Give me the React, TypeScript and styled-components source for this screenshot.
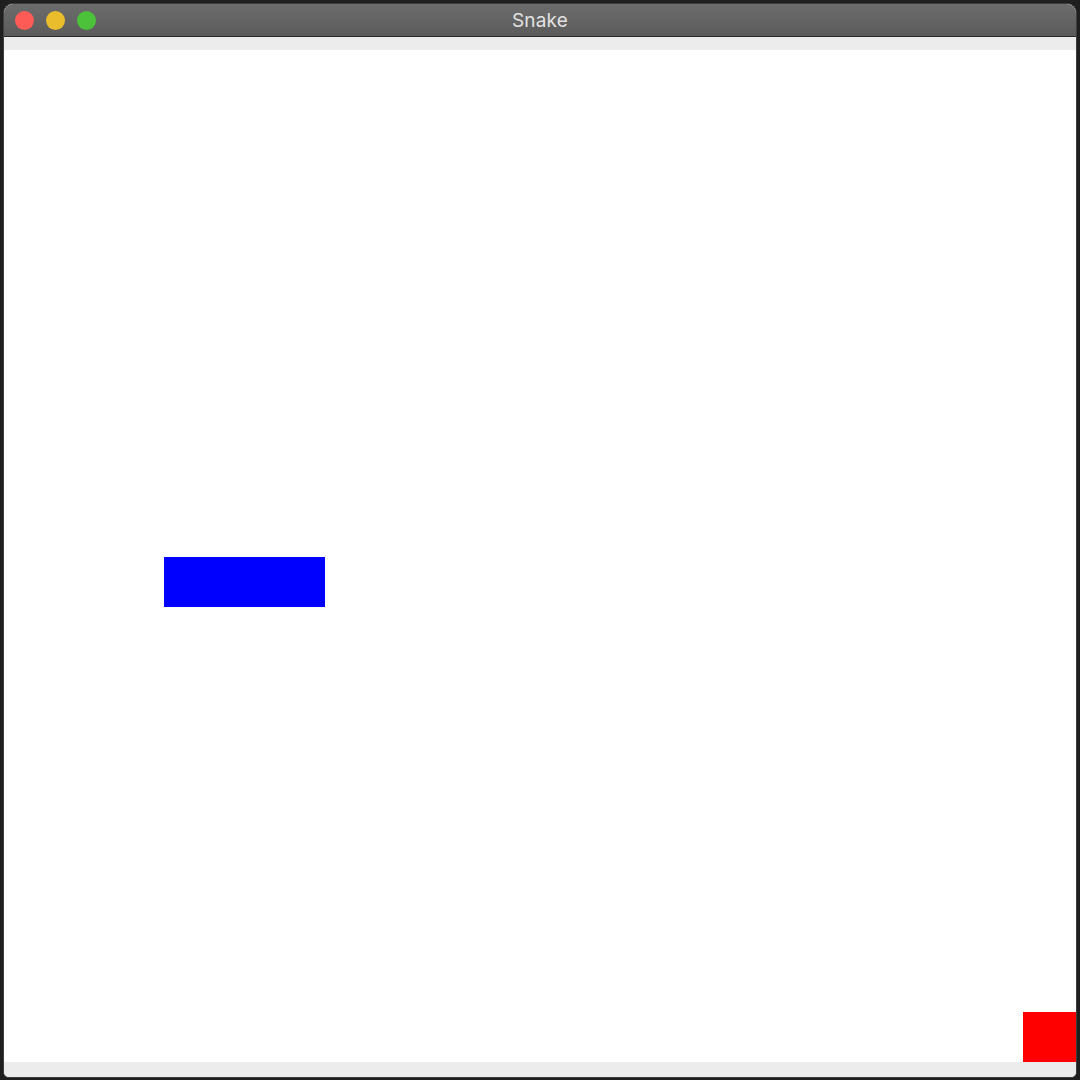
import React from "react";
import styled, { createGlobalStyle } from "styled-components";

const Global = createGlobalStyle`
  html, body { margin: 0; padding: 0; background: #1e1e1e; }
  body { width: 1080px; height: 1080px; overflow: hidden; font-family: "Inter", "Liberation Sans", sans-serif; }
`;

const Desktop = styled.div`
  width: 1080px;
  height: 1080px;
  padding: 3px 0 0 3px;
  box-sizing: border-box;
  background: #1f1f1f;
`;

const Window = styled.div`
  width: 1074px;
  height: 1075px;
  display: flex;
  flex-direction: column;
  border: 1px solid #3c3c3c;
  border-radius: 10px 10px 6px 6px;
  overflow: hidden;
  background: #ececec;
  box-sizing: border-box;
`;

const TitleBar = styled.div`
  position: relative;
  height: 33px;
  flex: 0 0 33px;
  display: flex;
  align-items: center;
  justify-content: center;
  background: linear-gradient(#6c6c6c, #5b5b5b);
  border-bottom: 1px solid #2a2a2a;
  box-sizing: border-box;
`;

const Lights = styled.div`
  position: absolute;
  left: 11px;
  top: 7px;
  display: flex;
  gap: 12px;
`;

const Light = styled.span<{ $c: string }>`
  width: 19px;
  height: 19px;
  border-radius: 50%;
  background: ${(p) => p.$c};
`;

const Title = styled.span`
  color: #e2e2e2;
  font-size: 19px;
  font-family: "Inter", "Liberation Sans", sans-serif;
  letter-spacing: 0.2px;
`;

const TopStrip = styled.div`
  height: 13px;
  flex: 0 0 13px;
  background: #ececec;
`;

const Board = styled.div`
  position: relative;
  height: 1012px;
  flex: 0 0 1012px;
  background: #ffffff;
`;

const Cell = styled.div<{ $c: string }>`
  position: absolute;
  background: ${(p) => p.$c};
`;

const BottomStrip = styled.div`
  flex: 1;
  background: #ececec;
`;

const cells = [
  { x: 160, y: 507, w: 161, h: 50, c: "#0000ff" },
  { x: 1019, y: 962, w: 53, h: 50, c: "#ff0000" },
];

export default function App() {
  return (
    <>
      <Global />
      <Desktop>
        <Window>
          <TitleBar>
            <Lights>
              <Light $c="#fd5b55" />
              <Light $c="#e9bd2b" />
              <Light $c="#4cc23a" />
            </Lights>
            <Title>Snake</Title>
          </TitleBar>
          <TopStrip />
          <Board>
            {cells.map((c, i) => (
              <Cell key={i} $c={c.c} style={{ left: c.x, top: c.y, width: c.w, height: c.h }} />
            ))}
          </Board>
          <BottomStrip />
        </Window>
      </Desktop>
    </>
  );
}
